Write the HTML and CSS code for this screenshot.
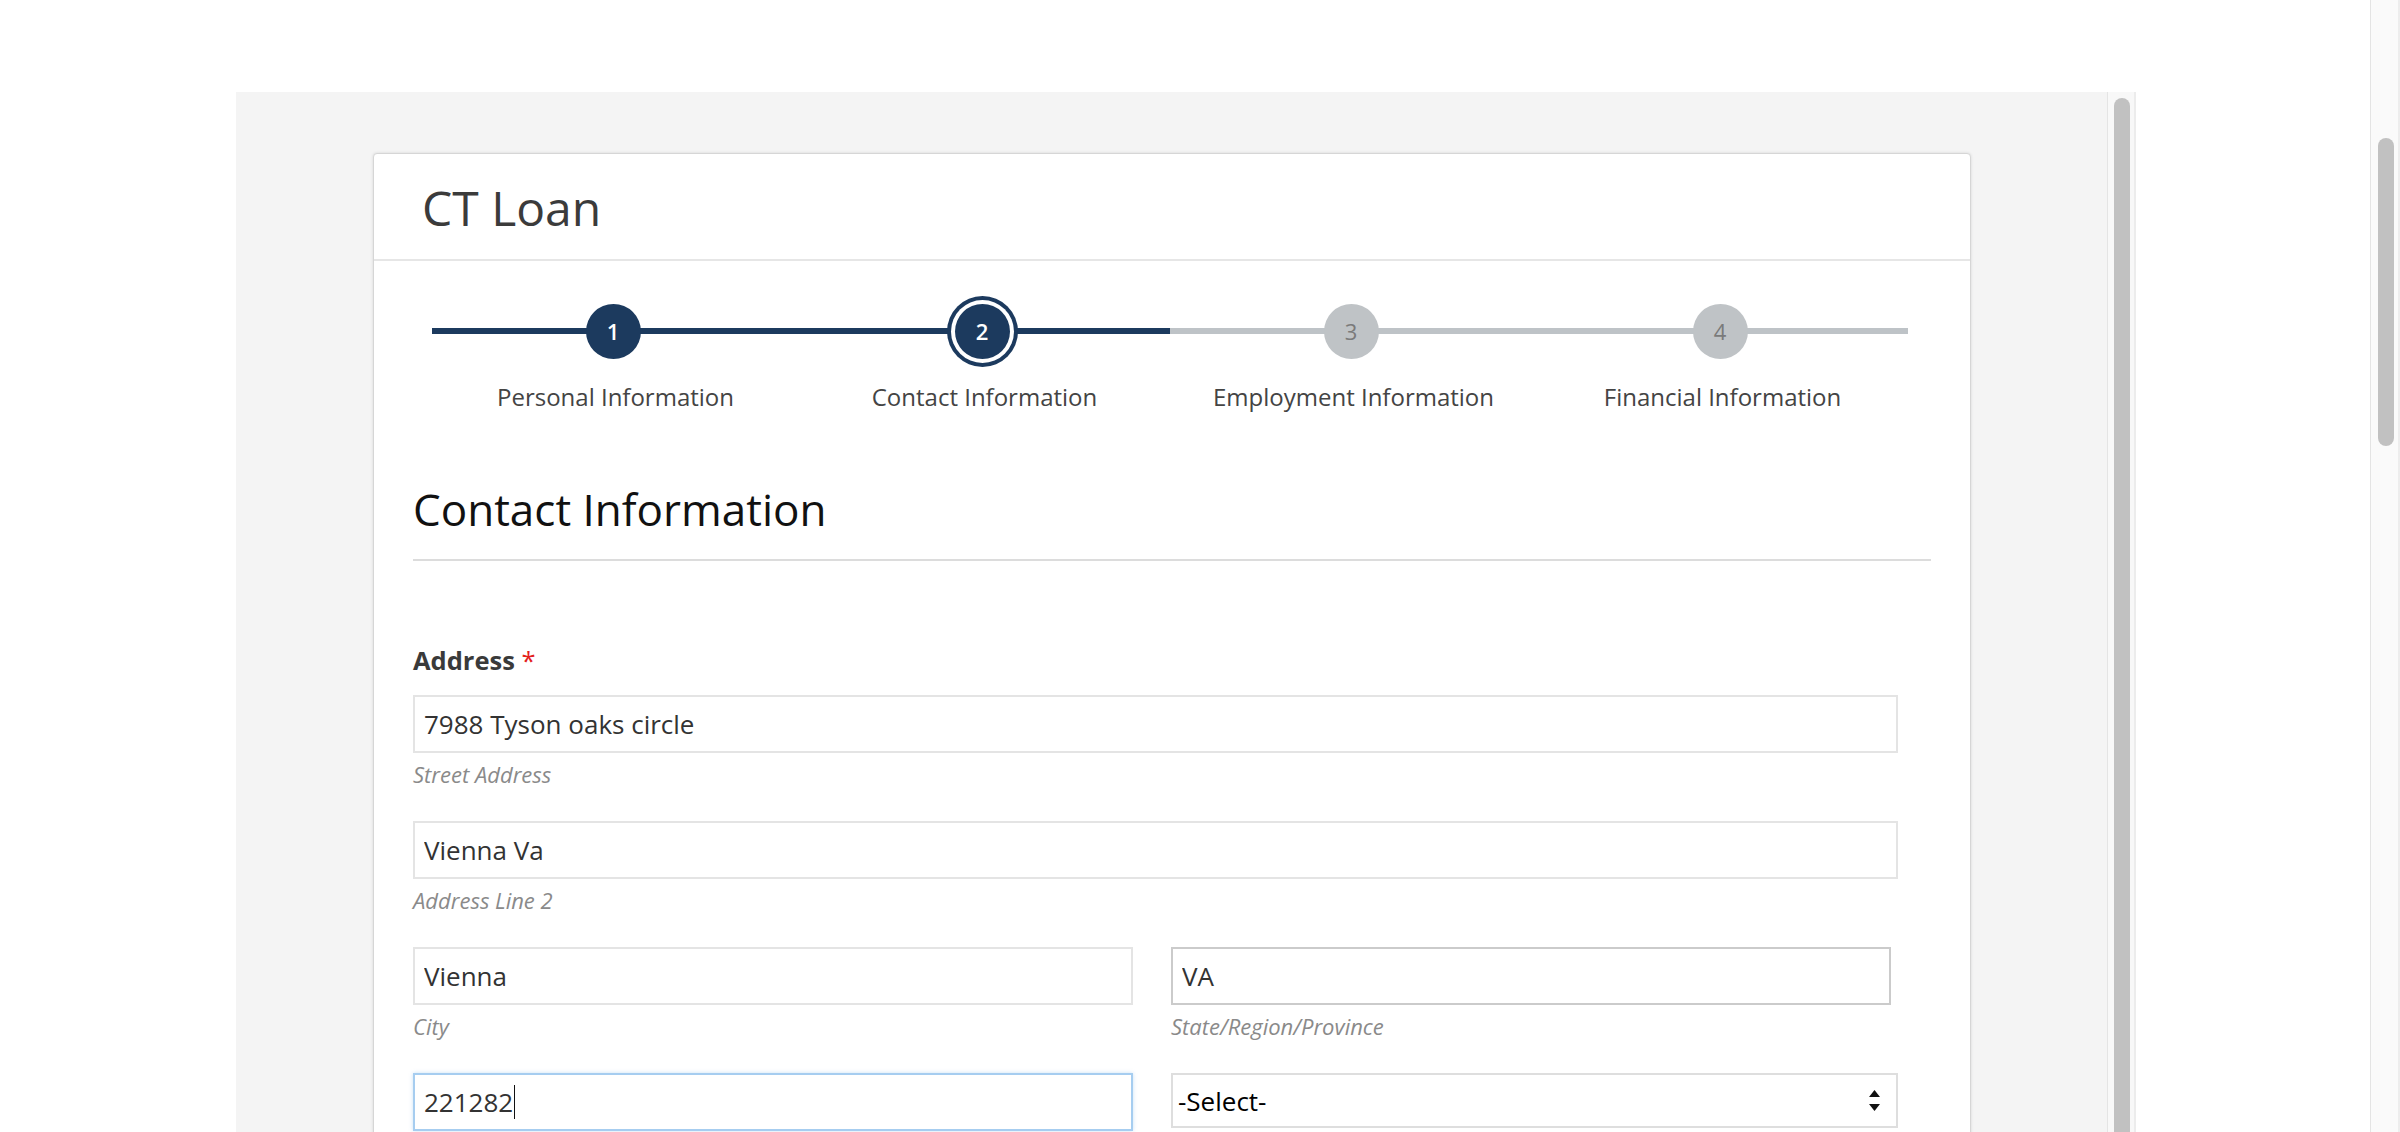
FILE: index.html
```html
<!DOCTYPE html>
<html lang="en">
<head>
<meta charset="utf-8">
<title>CT Loan</title>
<link rel="stylesheet" href="styles.css">
</head>
<body>
<div class="window">
  <div class="viewport">
    <div class="frame">
      <div class="frame-content">
        <div class="card">
          <div class="card-header">CT Loan</div>
          <div class="card-body">
            <div class="stepper">
              <div class="step step-done">
                <div class="step-track"><div class="step-dot">1</div></div>
                <div class="step-label">Personal Information</div>
              </div>
              <div class="step step-done step-current">
                <div class="step-track"><div class="step-dot">2</div></div>
                <div class="step-label">Contact Information</div>
              </div>
              <div class="step step-todo">
                <div class="step-track"><div class="step-dot">3</div></div>
                <div class="step-label">Employment Information</div>
              </div>
              <div class="step step-todo">
                <div class="step-track"><div class="step-dot">4</div></div>
                <div class="step-label">Financial Information</div>
              </div>
            </div>

            <h2 class="section-title">Contact Information</h2>

            <div class="form">
              <div class="field-label">Address <span class="req">*</span></div>
              <div class="field">
                <input class="input" type="text" value="7988 Tyson oaks circle" readonly>
                <div class="help">Street Address</div>
              </div>
              <div class="field">
                <input class="input" type="text" value="Vienna Va" readonly>
                <div class="help">Address Line 2</div>
              </div>
              <div class="row">
                <div class="field">
                  <input class="input" type="text" value="Vienna" readonly>
                  <div class="help">City</div>
                </div>
                <div class="field">
                  <input class="input input-state" type="text" value="VA" readonly>
                  <div class="help">State/Region/Province</div>
                </div>
              </div>
              <div class="row">
                <div class="field">
                  <div class="input input-focus"><span>221282</span><span class="caret"></span></div>
                </div>
                <div class="field">
                  <div class="select">
                    <span>-Select-</span>
                    <svg class="select-arrows" width="11" height="21" viewBox="0 0 11 21" aria-hidden="true">
                      <polygon points="0,7 5.5,0 11,7" fill="#111"/>
                      <polygon points="0,14 5.5,21 11,14" fill="#111"/>
                    </svg>
                  </div>
                </div>
              </div>
            </div>
          </div>
        </div>
      </div>
      <div class="frame-scroll"><div class="thumb thumb-frame"></div></div>
    </div>
  </div>
  <div class="page-scroll"><div class="thumb thumb-page"></div></div>
</div>
</body>
</html>
```

FILE: styles.css
```css
* { box-sizing: border-box; }

html, body {
  margin: 0;
  padding: 0;
  background: #ffffff;
  font-family: "Open Sans", "Liberation Sans", sans-serif;
  overflow: hidden;
}

.window {
  display: flex;
  width: 2400px;
  height: 1132px;
  overflow: hidden;
}

.viewport {
  flex: 1;
  padding: 92px 0 0 236px;
}

.frame {
  display: flex;
  width: 1900px;
  height: 1040px;
}

.frame-content {
  flex: 1;
  background: #f4f4f4;
  padding: 61px 136px 0 137px;
  overflow: hidden;
}

.frame-scroll {
  width: 29px;
  height: 100%;
  background: #f8f8f8;
  border-left: 1px solid #e4e4e4;
  border-right: 2px solid #ececec;
  padding: 6px 4px 0 6px;
}

.page-scroll {
  width: 30px;
  height: 100%;
  background: #fafafa;
  border-left: 1px solid #e4e4e4;
  border-right: 2px solid #ededed;
  padding: 138px 4px 0 7px;
}

.thumb {
  width: 16px;
  background: #c1c1c1;
  border-radius: 8px;
}

.thumb-frame { height: 1200px; }
.thumb-page { height: 308px; }

/* Card */
.card {
  width: 1598px;
  background: #ffffff;
  border: 1px solid #d6d6d6;
  border-radius: 4px;
  box-shadow: 0 0 3px rgba(0, 0, 0, 0.12);
  padding-bottom: 300px;
}

.card-header {
  padding: 25px 48px 22px;
  font-size: 48px;
  line-height: 58px;
  color: #3b3b3b;
  border-bottom: 2px solid #e6e6e6;
}

.card-body {
  padding: 0 39px;
}

/* Stepper */
.stepper {
  display: grid;
  grid-template-columns: repeat(4, 369px);
  margin: 35px 0 0 19px;
}

.step {
  display: flex;
  flex-direction: column;
  align-items: center;
}

.step-track {
  align-self: stretch;
  height: 70px;
  display: flex;
  align-items: center;
  justify-content: center;
  background: linear-gradient(#1c3a5e, #1c3a5e) center / 100% 6px no-repeat;
}

.step-todo .step-track {
  background: linear-gradient(#bec3c7, #bec3c7) center / 100% 6px no-repeat;
}

.step-dot {
  width: 55px;
  height: 55px;
  margin-right: 7px;
  border-radius: 50%;
  background: #1c3a5e;
  color: #ffffff;
  font-size: 22px;
  font-weight: 600;
  display: flex;
  align-items: center;
  justify-content: center;
}

.step-current .step-dot {
  box-shadow: 0 0 0 4px #ffffff, 0 0 0 8px #1c3a5e;
}

.step-todo .step-dot {
  background: #bfc3c6;
  color: #7a7a7a;
  font-weight: 400;
}

.step-label {
  margin-top: 14px;
  margin-right: 2px;
  font-size: 24px;
  line-height: 34px;
  color: #444444;
}

/* Section */
.section-title {
  margin: 69px 0 0;
  padding-bottom: 23px;
  font-size: 44px;
  line-height: 53px;
  font-weight: 400;
  color: #111111;
  border-bottom: 2px solid #dcdcdc;
}

.form {
  width: 1485px;
}

.field-label {
  margin-top: 82px;
  margin-bottom: 18px;
  font-size: 25.5px;
  line-height: 34px;
  font-weight: 700;
  color: #3a3a3a;
}

.req {
  color: #e3201b;
  font-weight: 400;
}

.field {
  margin-bottom: 32px;
}

.row {
  display: grid;
  grid-template-columns: 720px 1fr;
  column-gap: 38px;
}

.input {
  display: flex;
  align-items: center;
  width: 100%;
  height: 58px;
  margin: 0;
  padding: 0 9px;
  border: 2px solid #e4e4e4;
  border-radius: 0;
  background: #ffffff;
  font-family: "Open Sans", "Liberation Sans", sans-serif;
  font-size: 26px;
  color: #333333;
  outline: none;
}

.input-state {
  width: 720px;
  border-color: #cbcbcb;
}

.input-focus {
  border-color: #a6cdf0;
  box-shadow: 0 0 4px rgba(102, 170, 230, 0.35);
}

.caret {
  display: inline-block;
  width: 1px;
  height: 34px;
  margin-left: 1px;
  background: #111111;
}

.select {
  display: flex;
  align-items: center;
  justify-content: space-between;
  width: 100%;
  height: 55px;
  padding: 0 16px 0 5px;
  border: 2px solid #dedede;
  background: #ffffff;
  font-size: 26px;
  color: #000000;
}

.select-arrows {
  display: block;
}

.help {
  margin-top: 7px;
  font-size: 22px;
  line-height: 29px;
  font-style: italic;
  color: #8a8a8a;
}
```
